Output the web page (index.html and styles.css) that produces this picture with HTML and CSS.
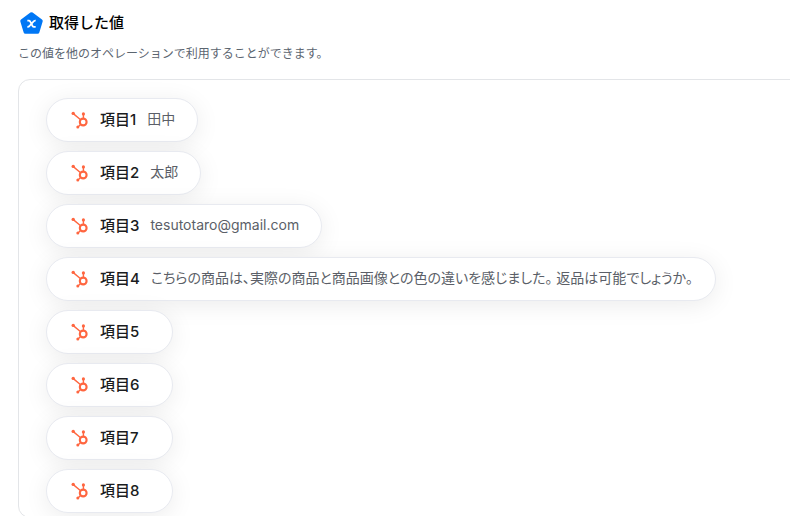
FILE: index.html
```
<!DOCTYPE html>
<html lang="ja">
<head>
  <meta charset="UTF-8">
  <title>取得した値</title>
  <link rel="stylesheet" href="styles.css">
</head>
<body>
  <svg class="sprite" aria-hidden="true">
    <symbol id="hubspot" viewBox="0 0 18 18">
      <g fill="none" stroke="#ff6640">
        <circle cx="12.2" cy="11" r="3.4" stroke-width="2.1"/>
        <path d="M12.4 7.6V3M9.6 8.7L2.3 2.6M9.8 13.3L7 16" stroke-width="1.4"/>
      </g>
      <g fill="#ff6640">
        <circle cx="2.2" cy="2.4" r="1.7"/>
        <circle cx="12.4" cy="2.9" r="1.6"/>
        <circle cx="6.8" cy="16.1" r="1.5"/>
      </g>
    </symbol>
  </svg>

  <header class="header">
    <svg class="header-icon" viewBox="0 0 24 24" aria-hidden="true">
      <path d="M12 3L21 9.6L17.8 20H6.2L3 9.6Z" fill="#0077f5" stroke="#0077f5" stroke-width="3.6" stroke-linejoin="round"/>
      <path d="M8 9.3H9.4Q10.3 9.3 10.8 10.2L13 14.4Q13.5 15.3 14.4 15.3H16M16 9.3Q14.6 9.1 13.6 10.4L10.3 14.2Q9.4 15.4 8 15.3" fill="none" stroke="#fff" stroke-width="1.7"/>
    </svg>
    <h1>取得した値</h1>
  </header>
  <p class="description">この値を他のオペレーションで利用することができます。</p>

  <ul class="values">
    <li class="pill"><svg class="icon"><use href="#hubspot"/></svg><span class="name">項目1</span><span class="value">田中</span></li>
    <li class="pill"><svg class="icon"><use href="#hubspot"/></svg><span class="name">項目2</span><span class="value">太郎</span></li>
    <li class="pill"><svg class="icon"><use href="#hubspot"/></svg><span class="name">項目3</span><span class="value">tesutotaro@gmail.com</span></li>
    <li class="pill"><svg class="icon"><use href="#hubspot"/></svg><span class="name">項目4</span><span class="value">こちらの商品は、実際の商品と商品画像との色の違いを感じました。 返品は可能でしょうか。</span></li>
    <li class="pill"><svg class="icon"><use href="#hubspot"/></svg><span class="name">項目5</span><span class="value"></span></li>
    <li class="pill"><svg class="icon"><use href="#hubspot"/></svg><span class="name">項目6</span><span class="value"></span></li>
    <li class="pill"><svg class="icon"><use href="#hubspot"/></svg><span class="name">項目7</span><span class="value"></span></li>
    <li class="pill"><svg class="icon"><use href="#hubspot"/></svg><span class="name">項目8</span><span class="value"></span></li>
  </ul>
</body>
</html>
```
FILE: styles.css
```
* { box-sizing: border-box; }
body { margin: 0; padding: 11px 0 0 18px; overflow: hidden; background: #fff; color: #222; font-family: Inter, "Noto Sans CJK JP", sans-serif; }
.sprite { display: none; }
.header { display: flex; align-items: center; gap: 5px; padding-left: 1px; height: 24px; }
.header-icon { width: 25px; height: 25px; }
.header h1 { margin: 0; font-size: 15px; line-height: 24px; font-weight: 500; color: #000; }
.description { margin: 9px 0 15px; font-size: 12px; line-height: 20px; color: #5b6570; }
.values { list-style: none; display: flex; flex-direction: column; align-items: flex-start; gap: 9px; margin: 0 -20px 0 0; padding: 18px 27px 4px; border: 1px solid #e3e5e8; border-radius: 12px; overflow: hidden; }
.pill { display: flex; align-items: center; height: 44px; padding: 0 22px 0 24px; border: 1px solid #e8eaf0; border-radius: 22px; background: #fff; box-shadow: 0 4px 24px rgba(0,0,0,0.08); white-space: nowrap; }
.icon { width: 18px; height: 18px; margin-right: 11px; }
.name { margin-right: 11px; font-size: 15px; line-height: 24px; font-weight: 500; color: #1a1c20; }
.value { padding-bottom: 2px; font-size: 14px; line-height: 20px; color: #5b5f68; font-feature-settings: "palt"; }
```
